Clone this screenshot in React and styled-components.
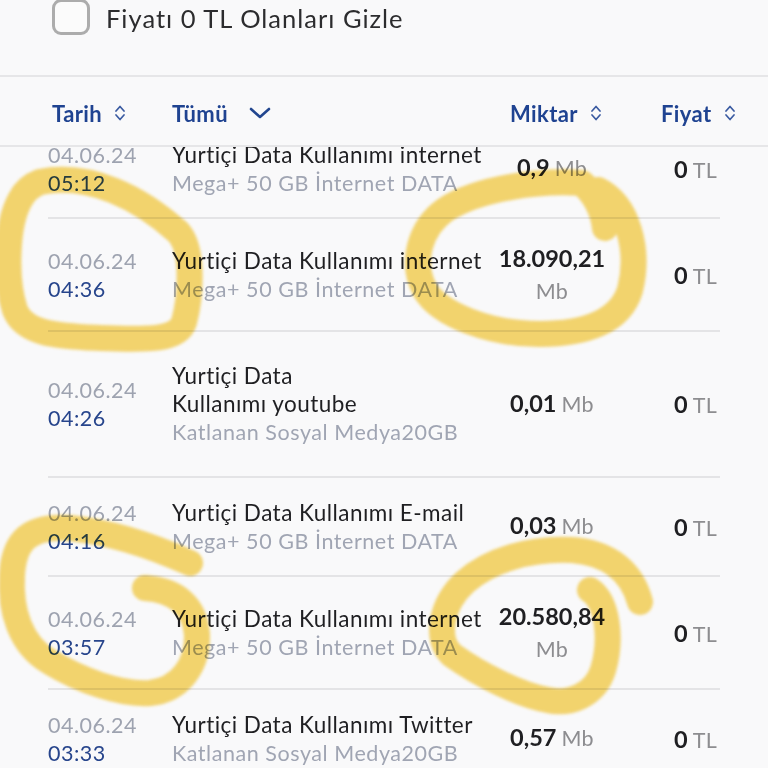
import React from "react";
import styled, { createGlobalStyle } from "styled-components";

const Global = createGlobalStyle`
  html, body { margin: 0; padding: 0; background: #f9f9fa; }
  body { font-family: "Lato", "Noto Sans", sans-serif; -webkit-font-smoothing: antialiased; }
`;

const Page = styled.div`
  position: relative;
  width: 768px;
  height: 768px;
  overflow: hidden;
  background: #f9f9fa;
  display: flex;
  flex-direction: column;
`;

const FilterBar = styled.label`
  display: flex;
  align-items: flex-start;
  gap: 16px;
  height: 75px;
  padding-left: 52px;
  border-bottom: 2px solid #e6e6e8;
  flex-shrink: 0;
`;

const CheckBox = styled.span`
  box-sizing: border-box;
  width: 38px;
  height: 36px;
  margin-top: -1px;
  border: 3px solid #acacac;
  border-radius: 9px;
  background: #fbfbfb;
`;

const FilterLabel = styled.span`
  font-size: 25.5px;
  line-height: 36px;
  color: #2c2c2e;
  letter-spacing: 1px;
`;

const HeaderRow = styled.div`
  display: grid;
  grid-template-columns: 120px 338px 151px auto;
  align-items: center;
  height: 70px;
  padding-left: 52px;
  padding-top: 4px;
  box-sizing: border-box;
  border-bottom: 2px solid #e6e6e8;
  flex-shrink: 0;
  position: relative;
  z-index: 1;
  background: #f9f9fa;
`;

const HeaderCell = styled.div`
  display: flex;
  align-items: center;
  gap: ${(p) => p.$gap || 11}px;
  font-size: 22px;
  font-weight: 700;
  letter-spacing: 0.4px;
  color: #1f4391;
`;

const Viewport = styled.div`
  flex: 1;
  overflow: hidden;
`;

const List = styled.div`
  margin-top: -27px;
`;

const Row = styled.div`
  display: grid;
  grid-template-columns: 124px 318px 124px 1fr;
  align-items: center;
  min-height: ${(p) => p.$h}px;
  margin: 0 48px;
  border-bottom: 2px solid #e4e4e6;
  box-sizing: border-box;
`;

const DateCell = styled.div`
  display: flex;
  flex-direction: column;
  font-size: 21.5px;
  line-height: 28px;
  letter-spacing: 0.5px;
`;

const DateText = styled.span`
  color: #9ea3b0;
`;

const TimeText = styled.span`
  color: #27458c;
`;

const InfoCell = styled.div`
  display: flex;
  flex-direction: column;
  line-height: 28px;
`;

const Title = styled.span`
  font-size: 22.5px;
  letter-spacing: 0.45px;
  color: #1f1f22;
  white-space: pre;
`;

const Sub = styled.span`
  font-size: 21.5px;
  letter-spacing: 0.55px;
  color: #a0a5b3;
  white-space: nowrap;
`;

const AmountCell = styled.div`
  text-align: center;
  line-height: 30px;
  white-space: nowrap;
`;

const Num = styled.span`
  font-size: 23.5px;
  font-weight: 700;
  color: #1f1f22;
`;

const Unit = styled.span`
  display: ${(p) => (p.$stack ? "block" : "inline")};
  margin-left: ${(p) => (p.$stack ? 0 : 5)}px;
  font-size: 21.5px;
  letter-spacing: 0.3px;
  color: #8d8d90;
`;

const PriceCell = styled.div`
  text-align: right;
  padding-right: 3px;
  white-space: nowrap;
`;

const Overlay = styled.svg`
  position: absolute;
  left: 0;
  top: 0;
  width: 768px;
  height: 768px;
  pointer-events: none;
  mix-blend-mode: multiply;
  z-index: 2;
`;

const SortIcon = () => (
  <svg width="14" height="20" viewBox="0 0 14 20" fill="none" stroke="#3a5aa1" strokeWidth="1.7" strokeLinecap="round" strokeLinejoin="round">
    <path d="M3 8 L7 3.5 L11 8" />
    <path d="M3 12 L7 16.5 L11 12" />
  </svg>
);

const ChevronDown = () => (
  <svg width="24" height="14" viewBox="0 0 24 14" fill="none" stroke="#22468f" strokeWidth="2.6" strokeLinecap="round" strokeLinejoin="round">
    <path d="M3 3 L12 11 L21 3" />
  </svg>
);

const rows = [
  { h: 99, time: "05:12", title: "Yurtiçi Data Kullanımı internet", sub: "Mega+ 50 GB İnternet DATA", amount: "0,9" },
  { h: 113, time: "04:36", title: "Yurtiçi Data Kullanımı internet", sub: "Mega+ 50 GB İnternet DATA", amount: "18.090,21" },
  { h: 146, time: "04:26", title: "Yurtiçi Data\nKullanımı youtube", sub: "Katlanan Sosyal Medya20GB", amount: "0,01" },
  { h: 99, time: "04:16", title: "Yurtiçi Data Kullanımı E-mail", sub: "Mega+ 50 GB İnternet DATA", amount: "0,03" },
  { h: 113, time: "03:57", title: "Yurtiçi Data Kullanımı internet", sub: "Mega+ 50 GB İnternet DATA", amount: "20.580,84" },
  { h: 99, time: "03:33", title: "Yurtiçi Data Kullanımı Twitter", sub: "Katlanan Sosyal Medya20GB", amount: "0,57" },
];

export default function App() {
  return (
    <Page>
      <Global />
      <FilterBar>
        <CheckBox />
        <FilterLabel>Fiyatı 0 TL Olanları Gizle</FilterLabel>
      </FilterBar>
      <HeaderRow>
        <HeaderCell>Tarih <SortIcon /></HeaderCell>
        <HeaderCell $gap={20}>Tümü <ChevronDown /></HeaderCell>
        <HeaderCell>Miktar <SortIcon /></HeaderCell>
        <HeaderCell>Fiyat <SortIcon /></HeaderCell>
      </HeaderRow>
      <Viewport>
        <List>
          {rows.map((r, i) => {
            const stack = r.amount.length > 6;
            return (
              <Row key={i} $h={r.h}>
                <DateCell>
                  <DateText>04.06.24</DateText>
                  <TimeText>{r.time}</TimeText>
                </DateCell>
                <InfoCell>
                  <Title>{r.title}</Title>
                  <Sub>{r.sub}</Sub>
                </InfoCell>
                <AmountCell>
                  <Num>{r.amount}</Num>
                  <Unit $stack={stack}>Mb</Unit>
                </AmountCell>
                <PriceCell>
                  <Num>0</Num>
                  <Unit>TL</Unit>
                </PriceCell>
              </Row>
            );
          })}
        </List>
      </Viewport>
      <Overlay viewBox="0 0 768 768">
        <defs>
          <filter id="soft" x="-10%" y="-10%" width="120%" height="120%">
            <feGaussianBlur stdDeviation="1.6" />
          </filter>
        </defs>
        <g fill="none" stroke="#f7d35c" strokeWidth="26" strokeLinecap="round" strokeLinejoin="round" filter="url(#soft)" opacity="0.88">
          <path d="M40 182 C90 172 140 198 178 232 C195 250 190 300 184 322 C178 340 150 340 100 338 C60 336 25 335 15 310 C5 280 6 225 20 200 C25 190 32 185 40 182" />
          <path d="M598 190 C628 205 640 250 630 290 C620 322 585 334 540 334 C490 334 440 315 425 290 C410 262 420 228 445 210 C478 188 540 180 582 183 C596 196 603 210 605 228" />
          <path d="M145 588 C175 590 195 605 197 635 C198 665 180 690 150 693 C120 695 80 680 50 662 C20 645 10 610 12 575 C14 540 30 525 70 528 C110 532 150 545 190 563" />
          <path d="M590 590 C608 602 612 640 603 670 C595 695 570 705 548 700 C520 695 480 675 452 655 C435 640 440 605 465 582 C490 560 530 548 572 550 C610 553 632 572 640 602" />
        </g>
      </Overlay>
    </Page>
  );
}
